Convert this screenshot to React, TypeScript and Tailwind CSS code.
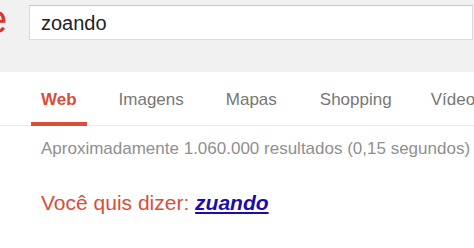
import React from "react";

export default function App() {
  const tabs = [
    { label: "Web", active: true, ml: "ml-[31px]" },
    { label: "Imagens", active: false, ml: "ml-[22px]" },
    { label: "Mapas", active: false, ml: "ml-[22px]" },
    { label: "Shopping", active: false, ml: "ml-[23px]" },
    { label: "Vídeos", active: false, ml: "ml-[19px]" },
  ];
  return (
    <div
      className="w-[474px] h-[248px] bg-white overflow-hidden"
      style={{ fontFamily: '"Liberation Sans", Arial, sans-serif' }}
    >
      <div className="h-[72px] bg-[#f1f1f1] flex items-start pt-[5px]">
        <div className="w-[29px] h-[40px] overflow-hidden relative shrink-0">
          <span className="absolute left-[-15px] top-[-11px] text-[40px] leading-[50px] text-[#d9342b]">
            e
          </span>
        </div>
        <div className="w-[444px] h-[35px] bg-white border border-[#d9d9d9] border-t-[#c4c4c4] pl-[11px] shrink-0">
          <span className="text-[20px] leading-[33px] text-[#222] block pt-[1px]">zoando</span>
        </div>
      </div>
      <div className="h-[54px] border-b border-[#ebebeb] flex whitespace-nowrap">
        {tabs.map((t) => (
          <div
            key={t.label}
            className={`${t.ml} px-[10px] h-[54px] pt-[18px] text-[17px] leading-[20px] shrink-0 ${
              t.active
                ? "font-bold text-[#dd4b39] border-b-[4px] border-[#dd4b39]"
                : "text-[#777]"
            }`}
          >
            {t.label}
          </div>
        ))}
      </div>
      <div className="pl-[41px] pt-[13px] text-[17px] leading-[20px] text-[#8f8f8f] whitespace-nowrap">
        Aproximadamente 1.060.000 resultados (0,15 segundos)
      </div>
      <div className="pl-[41px] mt-[32px] text-[21px] leading-[24px] text-[#dd4b39] whitespace-nowrap">
        Você quis dizer:{" "}
        <a className="text-[#1a0dab] font-bold italic underline">zuando</a>
      </div>
    </div>
  );
}
